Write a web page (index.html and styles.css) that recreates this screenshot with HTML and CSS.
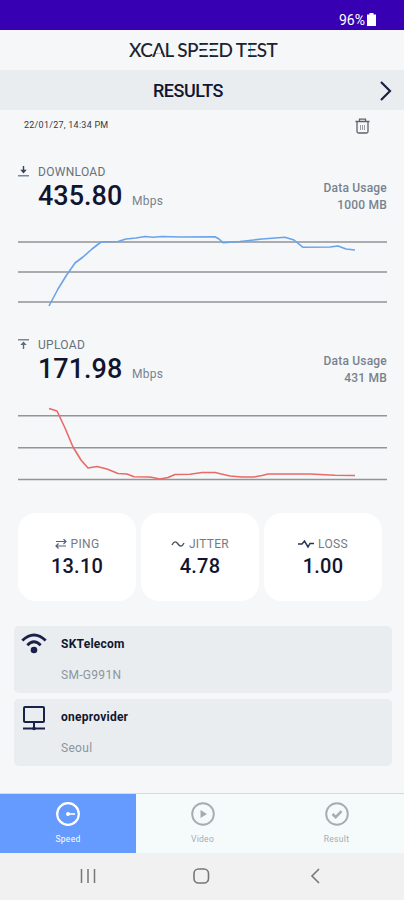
FILE: index.html
```html
<!DOCTYPE html>
<html lang="en">
<head>
    <meta charset="UTF-8">
    <meta name="viewport" content="width=device-width, initial-scale=1.0">
    <title>XCAL Speed Test</title>
    <link rel="stylesheet" href="styles.css">
</head>
<body>
    <div class="status-bar">
        <span>96%</span>
        <svg width="9" height="13" viewBox="0 0 9 13"><path d="M2.500 0h4v1.500H9V13H0V1.500h2.500z" fill="#fff"/></svg>
    </div>

    <header class="app-title">
        <h1>XC<span class="open-a">A</span>L SP<span class="bar-e">E</span><span class="bar-e">E</span>D T<span class="bar-e">E</span>ST</h1>
    </header>

    <div class="results-bar">
        <h2>RESULTS</h2>
        <svg class="next" width="14" height="22" viewBox="0 0 14 22"><path d="M2 2l9 9-9 9" fill="none" stroke="#1b2140" stroke-width="2.200"/></svg>
    </div>

    <div class="date-row">
        <span>22/01/27, 14:34 PM</span>
        <svg width="15" height="16" viewBox="0 0 15 16" fill="none" stroke="#5d646c" stroke-width="1.300">
            <path d="M.5 3.500h14M4.500 3V1.200h6V3M2 4v9.500q0 1.500 1.500 1.500h8q1.500 0 1.500-1.500V4"/>
            <path d="M5.500 7v5M7.500 7v5M9.500 7v5" stroke-width=".9" stroke="#8c9299"/>
        </svg>
    </div>

    <section class="test download">
        <div class="test-head">
            <svg class="dir" width="11" height="11" viewBox="0 0 11 11"><path d="M0 9.800h11" stroke="#5f6b7b" stroke-width="1.200"/><path d="M5.500 0v5" stroke="#33415c" stroke-width="1.400"/><path d="M2.300 3.800h6.400L5.500 7.500z" fill="#33415c"/></svg>
            <div class="speed">
                <div class="label">DOWNLOAD</div>
                <div class="value">435.80 <span>Mbps</span></div>
            </div>
            <div class="usage">Data Usage<br>1000 MB</div>
        </div>
        <svg class="chart" width="369" height="80" viewBox="18 230 369 80">
            <path class="grid" d="M18 242h369M18 272h369M18 302h369"/>
            <polyline class="line-down" points="49,306 58,289 66,276 75,263 83,257 92,249 101,242 118,241.500 126,239 136,238 145,236.500 153,237.200 162,236.500 180,237 215,236.800 219,239 223,242.700 240,241.500 262,239 285,237.200 294,240 303,247.300 330,247 338,246 346,249 355,250"/>
        </svg>
    </section>

    <section class="test upload">
        <div class="test-head">
            <svg class="dir" width="11" height="11" viewBox="0 0 11 11"><path d="M0 .8h11" stroke="#5f6b7b" stroke-width="1.200"/><path d="M5.500 5v5" stroke="#5f6b7b" stroke-width="1.400"/><path d="M2.300 6h6.400L5.500 2.500z" fill="#5f6b7b"/></svg>
            <div class="speed">
                <div class="label">UPLOAD</div>
                <div class="value">171.98 <span>Mbps</span></div>
            </div>
            <div class="usage">Data Usage<br>431 MB</div>
        </div>
        <svg class="chart" width="369" height="80" viewBox="18 403 369 80">
            <path class="grid" d="M18 415.800h369M18 447.800h369M18 479.500h369"/>
            <polyline class="line-up" points="49,408.500 57,411 65,428 73,447 81,460 88,468 97,466.500 107,469 118,473.500 127,474 134,476.800 150,477 160,479 168,477.500 175,474.500 190,474.200 202,472.500 215,472.500 230,476 242,477 254,477 262,475.500 268,474 310,474 335,475.200 355,475.500"/>
        </svg>
    </section>

    <div class="cards">
        <div class="card">
            <div class="card-label">
                <svg width="12" height="10" viewBox="0 0 12 10" fill="none" stroke="#55637a" stroke-width="1.200"><path d="M1 2.500h10M8.500 0l2.500 2.500L8.500 5M11 7H1M3.500 4.500L1 7l2.500 2.500"/></svg>
                PING
            </div>
            <div class="card-value">13.10</div>
        </div>
        <div class="card">
            <div class="card-label">
                <svg width="14" height="8" viewBox="0 0 14 8" fill="none" stroke="#454f63" stroke-width="1.400"><path d="M1 5C3 1 5 1 7 4s4 3 6-1"/></svg>
                JITTER
            </div>
            <div class="card-value">4.78</div>
        </div>
        <div class="card">
            <div class="card-label">
                <svg width="16" height="10" viewBox="0 0 16 10" fill="none" stroke="#28345a" stroke-width="1.500"><path d="M0 5h4l2.500-3L10 8l2-3.500h4"/></svg>
                LOSS
            </div>
            <div class="card-value">1.00</div>
        </div>
    </div>

    <div class="info">
        <svg width="26" height="22" viewBox="0 0 26 22" fill="none" stroke="#19204a" stroke-width="2.800"><path d="M1.300 7.600Q13-3.500 24.700 7.600M6.300 12.200Q13 5.500 19.700 12.200"/><circle cx="13" cy="17" r="3.300" fill="#19204a" stroke="none"/></svg>
        <div>
            <div class="info-name">SKTelecom</div>
            <div class="info-sub">SM-G991N</div>
        </div>
    </div>
    <div class="info">
        <svg width="26" height="25" viewBox="0 0 26 25" fill="none" stroke="#19204a" stroke-width="2"><rect x="3" y="1" width="20" height="15" rx="1"/><path d="M13 16v8M2 22.500h22"/><circle cx="13" cy="22.500" r="1.800" fill="#19204a" stroke="none"/></svg>
        <div>
            <div class="info-name">oneprovider</div>
            <div class="info-sub">Seoul</div>
        </div>
    </div>

    <nav class="tabs">
        <div class="tab active">
            <svg width="24" height="24" viewBox="0 0 24 24" fill="none" stroke="currentColor" stroke-width="2.200"><circle cx="12" cy="12" r="10.800"/><path d="M12 12h7" stroke-width="1.600"/><circle cx="12" cy="12" r="2" fill="currentColor" stroke="none"/></svg>
            <span>Speed</span>
        </div>
        <div class="tab">
            <svg width="24" height="24" viewBox="0 0 24 24" fill="none" stroke="currentColor" stroke-width="1.900"><circle cx="12" cy="12" r="10.800"/><path d="M9.500 8v8l6.500-4z" fill="currentColor" stroke="none"/></svg>
            <span>Video</span>
        </div>
        <div class="tab">
            <svg width="24" height="24" viewBox="0 0 24 24" fill="none" stroke="currentColor" stroke-width="1.900"><circle cx="12" cy="12" r="10.800"/><path d="M7.500 12l3.200 3.200 5.800-6" stroke-width="2.500"/></svg>
            <span>Result</span>
        </div>
    </nav>

    <div class="system-nav">
        <svg width="16" height="16" viewBox="0 0 16 16"><path d="M1.500 1v14M8 1v14M14.500 1v14" stroke="#777" stroke-width="1.500"/></svg>
        <svg width="17" height="16" viewBox="0 0 17 16"><rect x="1" y="1" width="14.500" height="14" rx="4.500" fill="none" stroke="#777" stroke-width="1.600"/></svg>
        <svg width="14" height="16" viewBox="-3 0 14 16"><path d="M9 1L2 8l7 7" fill="none" stroke="#777" stroke-width="1.600"/></svg>
    </div>
</body>
</html>
```

FILE: styles.css
```css
* {
    box-sizing: border-box;
}
body, html {
    margin: 0;
    padding: 0;
}
body {
    width: 404px;
    height: 900px;
    display: flex;
    flex-direction: column;
    overflow: hidden;
    font-family: Roboto, "Liberation Sans", sans-serif;
    background-color: #f5f7f9;
    color: #12152f;
}
h1, h2 {
    margin: 0;
}
svg {
    flex: none;
    display: block;
}
.status-bar {
    height: 30px;
    background-color: #3700b3;
    color: #fff;
    display: flex;
    justify-content: flex-end;
    align-items: flex-start;
    gap: 2px;
    padding: 13px 28px 0 0;
    font-size: 14px;
    line-height: 15px;
}
.app-title {
    height: 40px;
    display: flex;
    justify-content: center;
    align-items: center;
    padding-left: 2px;
}
.app-title h1 {
    font-family: Lato, sans-serif;
    font-size: 19px;
    font-weight: 500;
    line-height: 24px;
    letter-spacing: -0.65px;
    white-space: nowrap;
    color: #20232e;
}
.open-a, .bar-e {
    position: relative;
    display: inline-block;
}
/* cut the stem of the E and the crossbar of the A */
.bar-e::before {
    content: "";
    position: absolute;
    left: 1px;
    top: 7px;
    width: 3px;
    height: 10px;
    background: linear-gradient(#f5f7f9 4px, transparent 4px, transparent 6px, #f5f7f9 6px);
}
.open-a::before {
    content: "";
    position: absolute;
    left: 4px;
    top: 13px;
    width: 5px;
    height: 2px;
    background: #f5f7f9;
}
.results-bar {
    height: 40px;
    background-color: #e9edf0;
    display: flex;
    align-items: center;
    padding: 2px 11px 0 153px;
}
.results-bar h2 {
    flex: 1;
    font-size: 18px;
    font-weight: 500;
    line-height: 22px;
    letter-spacing: -0.5px;
}
.date-row {
    height: 54px;
    display: flex;
    justify-content: space-between;
    align-items: flex-start;
    padding: 8px 34px 0 24px;
    font-size: 9px;
    line-height: 15px;
    letter-spacing: 0.25px;
    color: #35383f;
}
.test {
    padding: 0 17px 0 18px;
}
.download {
    height: 173px;
}
.upload {
    height: 176px;
}
.test-head {
    height: 66px;
    display: flex;
}
.dir {
    margin-top: 2px;
}
.speed {
    flex: 1;
    padding-left: 9px;
}
.label {
    font-size: 12px;
    line-height: 16px;
    letter-spacing: 0.3px;
    color: #68717b;
}
.value {
    font-size: 27px;
    font-weight: 500;
    line-height: 32px;
}
.value span {
    margin-left: 3px;
    font-size: 12px;
    font-weight: 400;
    letter-spacing: 0.3px;
    color: #78828e;
}
.usage {
    padding-top: 16px;
    font-size: 12px;
    font-weight: 500;
    line-height: 16.5px;
    letter-spacing: 0.2px;
    text-align: right;
    color: #78828e;
}
.chart .grid {
    stroke: #929497;
    stroke-width: 1.5;
}
.chart polyline {
    fill: none;
    stroke-width: 1.6;
    stroke-linejoin: round;
}
.line-down {
    stroke: #6ba3ea;
}
.line-up {
    stroke: #ea6a6a;
}
.cards {
    display: grid;
    grid-template-columns: repeat(3, 118px);
    gap: 5px;
    height: 88px;
    margin: 0 0 25px 18px;
}
.card {
    background: #fff;
    border-radius: 18px;
    padding-top: 23px;
    text-align: center;
}
.card-label {
    display: flex;
    justify-content: center;
    align-items: center;
    gap: 4px;
    font-size: 12px;
    line-height: 16px;
    letter-spacing: 0.3px;
    color: #747b84;
}
.card-value {
    font-size: 20px;
    font-weight: 500;
    line-height: 29px;
    letter-spacing: 0.2px;
}
.info {
    height: 67px;
    margin: 0 12px 6px 14px;
    padding: 7px 0 0 7px;
    display: flex;
    gap: 14px;
    border-radius: 5px;
    background: #e9edf0;
}
.info-name {
    padding-top: 3px;
    font-size: 12px;
    font-weight: 700;
    line-height: 16px;
    letter-spacing: 0.25px;
}
.info-sub {
    padding-top: 15px;
    font-size: 12px;
    line-height: 16px;
    letter-spacing: 0.3px;
    color: #8d959d;
}
.tabs {
    margin-top: auto;
    height: 60px;
    display: grid;
    grid-template-columns: 136px 133px 135px;
    border-top: 1px solid #d5d9dd;
    background: #f5fafb;
}
.tab {
    display: flex;
    flex-direction: column;
    align-items: center;
    padding-top: 8px;
    color: #a5adb3;
    font-size: 8.5px;
    line-height: 12px;
    letter-spacing: 0.3px;
}
.tab span {
    padding-top: 7px;
}
.tab.active {
    background: #659bff;
    color: #fff;
}
.system-nav {
    height: 47px;
    background: #f1f1f1;
    display: flex;
    align-items: flex-start;
    gap: 97px;
    padding: 15px 0 0 80px;
}
```
